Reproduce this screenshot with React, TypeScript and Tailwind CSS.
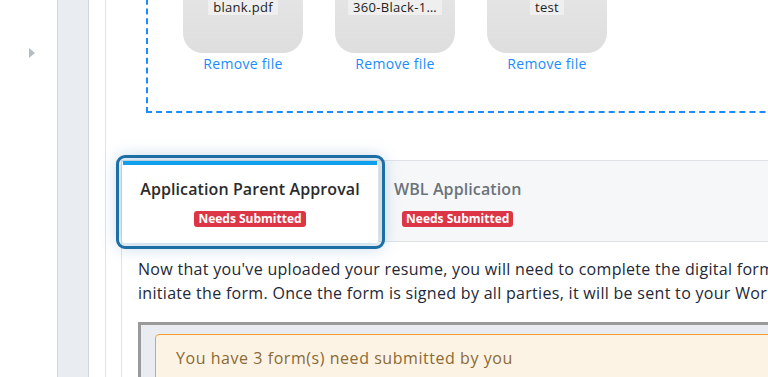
import React from 'react';

const files = ['blank.pdf', '360-Black-1…', 'test'];

function FilePreview({ name }: { name: string }) {
  return (
    <div className="flex w-[120px] flex-col items-center">
      <div className="flex h-[120px] w-[120px] flex-col items-center justify-end rounded-[20px] bg-gradient-to-b from-[#ececec] to-[#dedede] pb-[38px]">
        <span className="bg-[#efefef] px-[5px] text-[13px] leading-[15px] tracking-[0.3px] text-[#222]">{name}</span>
      </div>
      <a className="mt-[1px] text-[14px] leading-[20px] tracking-[0.3px] text-[#1a8cff]">Remove file</a>
    </div>
  );
}

export default function App() {
  return (
    <div
      className="flex h-[377px] w-[768px] overflow-hidden bg-white"
      style={{ fontFamily: '"Open Sans", "Noto Sans", sans-serif' }}
    >
      {/* collapsed sidebar */}
      <div className="w-[57px] shrink-0 pt-[48px] pl-[29px]">
        <svg width="6" height="10" viewBox="0 0 6 10">
          <path d="M0 0 L6 5 L0 10 Z" fill="#b4bcc6" />
        </svg>
      </div>
      <div className="w-[32px] shrink-0 border-x border-[#cfd6de] bg-[#e9edf2]" />
      <div className="w-[17px] shrink-0 border-r border-[#dde3ea]" />

      {/* main content */}
      <div className="w-[700px] shrink-0">
        {/* dropzone */}
        <div className="ml-[40px] mt-[-90px] w-[700px] border-2 border-dashed border-[#1a8cff] pt-[21px] pb-[37px] pl-[35px]">
          <div className="flex gap-[32px]">
            {files.map((f) => (
              <FilePreview key={f} name={f} />
            ))}
          </div>
        </div>

        {/* tabs */}
        <div className="ml-[15px] mt-[47px] border-l border-[#dde3ea]">
          <div className="flex h-[82px] border-y border-[#dfe3e8] bg-[#f6f7f9]">
            <div className="relative mb-[-2px] w-[257px] shrink-0 rounded-[3px] border-r border-[#dfe3e8] bg-white text-center shadow-[0_0_16px_5px_rgba(40,120,180,0.28)] outline-[3px] outline-offset-[3px] outline-[#1c6ea4] outline-solid">
              <div className="mx-[1px] h-[4px] bg-[#0ea0ee]" />
              <div className="mt-[14px] text-[16px] font-semibold leading-[20px] tracking-[0.1px] text-[#2b2b2b]">
                Application Parent Approval
              </div>
              <span className="mt-[12px] inline-block rounded-[3px] bg-[#dc3545] px-[4px] text-[12px] font-bold leading-[16px] text-white">
                Needs Submitted
              </span>
            </div>
            <div className="px-[15px] pt-[18px] text-center">
              <div className="text-[16px] font-semibold leading-[20px] tracking-[0.1px] text-[#6b737c]">WBL Application</div>
              <span className="mt-[12px] inline-block rounded-[3px] bg-[#dc3545] px-[4px] text-[12px] font-bold leading-[16px] text-white">
                Needs Submitted
              </span>
            </div>
          </div>

          <div className="pl-[16px] pt-[15px]">
            <p className="whitespace-nowrap text-[16px] leading-[24px] tracking-[0.3px] text-[#232838]">
              Now that you've uploaded your resume, you will need to complete the digital form. Click the button to
              <br />
              initiate the form. Once the form is signed by all parties, it will be sent to your Work-Based Learning
            </p>
            <div className="mt-[17px] h-[80px] border-l-[3px] border-t-[3px] border-[#9a9a9a] bg-[#e9ecf1] pl-[14px] pt-[9px]">
              <div className="h-[60px] rounded-[4px] border border-[#f5a030] bg-[#fdf3e4] pl-[20px] pt-[11px] text-[16px] leading-[24px] tracking-[0.55px] text-[#8a6a35]">
                You have 3 form(s) need submitted by you
              </div>
            </div>
          </div>
        </div>
      </div>
    </div>
  );
}
